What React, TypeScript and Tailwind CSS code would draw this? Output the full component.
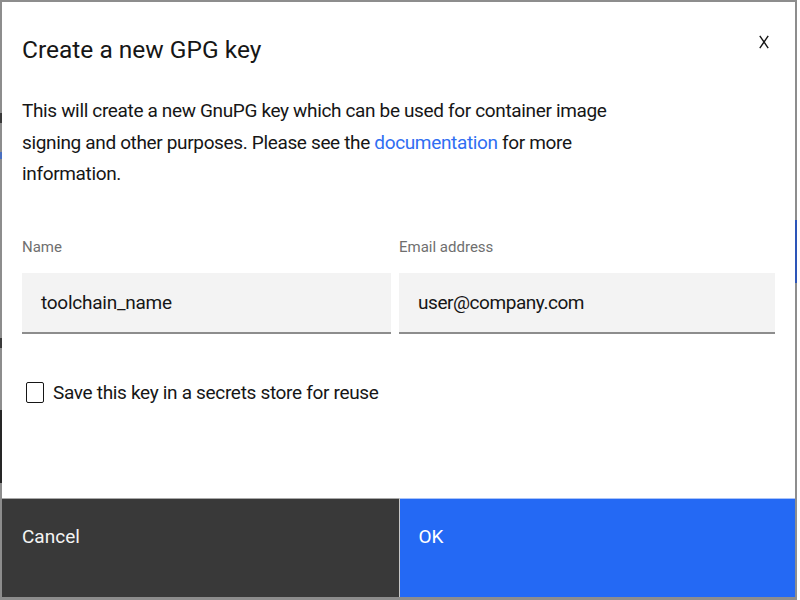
// Create GPG key modal, Carbon-ish look
const font = { fontFamily: "Roboto, 'Liberation Sans', sans-serif" };

function CloseIcon() {
  return (
    <svg width="10" height="14" viewBox="0 0 10 14" fill="none" stroke="#161616" strokeWidth="1.4">
      <path d="M0.8 0.8 L9.2 13.2 M9.2 0.8 L0.8 13.2" />
    </svg>
  );
}

export default function App() {
  return (
    <div className="w-[800px] h-[600px] bg-white overflow-hidden" style={font}>
      <div className="relative w-[797px] h-[600px] bg-[#8d8d8d] pt-[2px] pl-[2px] pr-[2px] pb-[3px]">
        {/* bits of the page behind the overlay */}
        <div className="absolute left-0 top-[113px] w-[2px] h-[10px] bg-[#3a3a3a]" />
        <div className="absolute left-0 top-[152px] w-[2px] h-[7px] bg-[#4a6fc0]" />
        <div className="absolute left-0 top-[338px] w-[2px] h-[10px] bg-[#3a3a3a]" />
        <div className="absolute left-0 top-[410px] w-[2px] h-[73px] bg-[#262626]" />
        <div className="absolute right-0 top-[220px] w-[2px] h-[63px] bg-[#2d55b8]" />

        <div className="relative bg-white h-full flex flex-col">
          <button className="absolute right-[26px] top-[33px]">
            <CloseIcon />
          </button>

          <div className="px-[20px] pt-[32px]">
            <h2 className="text-[24.5px] leading-[32px] text-[#161616] font-normal">Create a new GPG key</h2>
            <p className="mt-[29px] text-[19px] leading-[31.5px] tracking-[-0.35px] text-[#161616] w-[600px]">
              This will create a new GnuPG key which can be used for container image signing and other purposes. Please
              see the <a className="text-[#2f6ef2]">documentation</a> for more information.
            </p>

            <div className="mt-[47px] grid grid-cols-[369px_376px] gap-[8px]">
              <div>
                <div className="text-[15px] leading-[20px] text-[#6f6f6f]">Name</div>
                <div className="mt-[16px] h-[61px] pt-[3px] bg-[#f3f3f3] border-b-2 border-[#8d8d8d] flex items-center px-[19px] text-[19px] tracking-[-0.25px] text-[#161616]">
                  toolchain_name
                </div>
              </div>
              <div>
                <div className="text-[15px] leading-[20px] text-[#6f6f6f]">Email address</div>
                <div className="mt-[16px] h-[61px] pt-[3px] bg-[#f3f3f3] border-b-2 border-[#8d8d8d] flex items-center px-[19px] text-[19px] tracking-[-0.45px] text-[#161616]">
                  user@company.com
                </div>
              </div>
            </div>

            <label className="mt-[47px] flex items-center gap-[9px] text-[19px] leading-[24px] tracking-[-0.32px] text-[#161616]">
              <span className="ml-[4px] w-[18px] h-[21px] border-[1.5px] border-[#161616] rounded-[2px]" />
              Save this key in a secrets store for reuse
            </label>
          </div>

          <div className="mt-auto flex h-[99px] gap-[1px] bg-[#c6c6c6]">
            <button className="flex-1 bg-[#393939] border-t border-[#a8a8a8] text-left pl-[20px] pt-[26px] self-stretch flex items-start text-[19px] leading-[24px] text-[#f4f4f4]">
              Cancel
            </button>
            <button className="flex-1 bg-[#2469f4] border-t border-[#a9c3f8] text-left pl-[19px] pt-[26px] self-stretch flex items-start text-[19px] leading-[24px] text-white">
              OK
            </button>
          </div>
        </div>
      </div>
    </div>
  );
}
